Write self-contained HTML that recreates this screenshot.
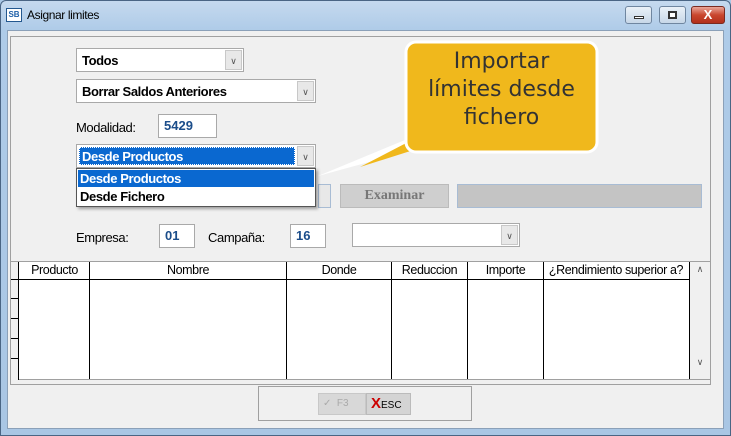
<!DOCTYPE html>
<html><head><style>
*{box-sizing:border-box;margin:0;padding:0}
body{width:731px;height:436px;overflow:hidden;background:#aac8e6;font-family:"Liberation Sans",sans-serif;position:relative}
.abs{position:absolute}
.win{left:0;top:0;width:731px;height:436px;background:linear-gradient(#c5d9ee,#aecbe8 30px,#a9c6e4);border:1px solid #4a6584;border-radius:6px 6px 0 0}
.client{left:7px;top:30px;width:717px;height:399px;background:#f0f0f0;border:1px solid #8ba0b8}
.n{font-size:13px;letter-spacing:-0.4px;color:#000}
.b{font-weight:bold}
.cb{background:#fff;border:1px solid #a9a9a9}
.arr{position:absolute;right:1px;top:1px;bottom:1px;width:17px;background:#e8e8e8;border:1px solid #c8c8c8;text-align:center;font-size:9px;color:#555;line-height:20px}
.tb{background:#fff;border:1px solid #a9a9a9;color:#1b4d8a;font-weight:bold;font-size:13px;padding-left:5px;line-height:22px}
.col{position:absolute;top:0;bottom:0;border-left:1px solid #000}
.hd{position:absolute;top:0;height:18px;font-size:12.5px;letter-spacing:-.4px;text-align:center;line-height:17px}
</style></head><body>
<div class="abs win"></div>
<div class="abs" style="left:6px;top:8px;width:16px;height:14px;background:#fff;border:1px solid #24588f;font-size:8px;font-weight:bold;color:#1d5fa8;line-height:12px;text-align:center">SB</div>
<div class="abs n" style="left:27px;top:8px;font-size:12px">Asignar limites</div>
<div class="abs" style="left:625px;top:6px;width:27px;height:18px;border:1px solid #6f86a0;border-radius:3px;background:linear-gradient(#eaf1f8,#c7d7e8)"><div style="margin:9px auto 0;width:10px;height:3px;border:1px solid #333;background:#fff"></div></div>
<div class="abs" style="left:659px;top:6px;width:27px;height:18px;border:1px solid #6f86a0;border-radius:3px;background:linear-gradient(#eaf1f8,#c7d7e8)"><div style="margin:4px auto 0;width:9px;height:8px;border:2px solid #333;background:#fff"></div></div>
<div class="abs" style="left:691px;top:6px;width:34px;height:18px;border:1px solid #7a2a20;border-radius:3px;background:linear-gradient(#e9a699,#c9462e 50%,#b2301c);color:#fff;font-weight:bold;font-size:13px;text-align:center;line-height:16px">X</div>
<div class="abs client"></div>
<div class="abs" style="left:10px;top:36px;width:701px;height:349px;border:1px solid #a0a0a0"></div>

<div class="abs cb" style="left:76px;top:48px;width:168px;height:24px"><span class="n b" style="position:absolute;left:5px;top:4px">Todos</span><div class="arr">&#8744;</div></div>
<div class="abs cb" style="left:76px;top:79px;width:240px;height:24px"><span class="n b" style="position:absolute;left:5px;top:4px">Borrar Saldos Anteriores</span><div class="arr">&#8744;</div></div>
<div class="abs n" style="left:76px;top:120px">Modalidad:</div>
<div class="abs tb" style="left:158px;top:114px;width:59px;height:24px">5429</div>
<div class="abs cb" style="left:76px;top:144px;width:240px;height:24px"><div style="position:absolute;left:2px;top:2px;right:20px;bottom:2px;background:#0a68d0;border:1px dotted #fff"></div><span class="n b" style="position:absolute;left:5px;top:4px;color:#fff">Desde Productos</span><div class="arr">&#8744;</div></div>

<div class="abs" style="left:318px;top:184px;width:13px;height:24px;border:1px solid #a8bcd4;background:#e8e8e8"></div>
<div class="abs" style="left:340px;top:184px;width:109px;height:24px;background:#cfcfcf;border:1px solid #bbb;font-family:'Liberation Serif',serif;font-weight:bold;color:#777;font-size:14px;text-align:center;line-height:22px">Examinar</div>
<div class="abs" style="left:457px;top:184px;width:245px;height:24px;background:#c4c4c4;border:1px solid #a8bcd4"></div>

<div class="abs" style="left:76px;top:168px;width:240px;height:39px;background:#fff;border:1px solid #555;box-shadow:2px 2px 3px rgba(0,0,0,.35)">
<div style="position:absolute;left:1px;top:1px;right:1px;height:17px;background:#0a68d0"></div>
<span class="n b" style="position:absolute;left:3px;top:2px;color:#fff">Desde Productos</span>
<span class="n b" style="position:absolute;left:3px;top:20px">Desde Fichero</span></div>

<div class="abs n" style="left:76px;top:230px">Empresa:</div>
<div class="abs tb" style="left:159px;top:224px;width:36px;height:24px">01</div>
<div class="abs n" style="left:208px;top:230px">Campaña:</div>
<div class="abs tb" style="left:290px;top:224px;width:36px;height:24px">16</div>
<div class="abs cb" style="left:352px;top:223px;width:168px;height:24px"><div class="arr">&#8744;</div></div>

<svg class="abs" style="left:0;top:0" width="731" height="436">
<polygon points="405,140 450,140 318,176" fill="#fff"/>
<polygon points="412,140 445,140 360,167" fill="#f0b81c"/>
<rect x="406" y="42" width="191" height="110" rx="10" fill="#f0b81c" stroke="#fff" stroke-width="3"/>
</svg>
<div class="abs" style="left:406px;top:48px;width:191px;text-align:center;font-family:'DejaVu Sans',sans-serif;font-size:22px;line-height:28px;color:#333">Importar<br>límites desde<br>fichero</div>

<div class="abs" style="left:10px;top:261px;width:701px;height:119px;background:#fff;border:1px solid #a0a0a0">
<div style="position:absolute;left:0;top:0;width:8px;height:118px;background:#f0f0f0;border-right:1px solid #000"></div>
<div style="position:absolute;left:0;top:17px;width:686px;border-top:1px solid #000"></div>
<div style="position:absolute;left:0;top:36px;width:8px;border-top:1px solid #000"></div>
<div style="position:absolute;left:0;top:56px;width:8px;border-top:1px solid #000"></div>
<div style="position:absolute;left:0;top:76px;width:8px;border-top:1px solid #000"></div>
<div style="position:absolute;left:0;top:96px;width:8px;border-top:1px solid #000"></div>
<div class="col" style="left:78px"></div><div class="col" style="left:275px"></div><div class="col" style="left:380px"></div><div class="col" style="left:456px"></div><div class="col" style="left:532px"></div><div class="col" style="left:678px"></div>
<div class="hd" style="left:9px;width:69px">Producto</div>
<div class="hd" style="left:79px;width:196px">Nombre</div>
<div class="hd" style="left:276px;width:104px">Donde</div>
<div class="hd" style="left:381px;width:75px">Reduccion</div>
<div class="hd" style="left:457px;width:75px">Importe</div>
<div class="hd" style="left:532px;width:146px">¿Rendimiento superior a?</div>
<div style="position:absolute;left:679px;top:0;width:20px;height:117px;background:#f0f0f0;font-size:9px;color:#555;text-align:center"><div style="margin-top:2px">&#8743;</div><div style="margin-top:82px">&#8744;</div></div>
</div>

<div class="abs" style="left:258px;top:386px;width:214px;height:35px;border:1px solid #a0a0a0"></div>
<div class="abs" style="left:318px;top:393px;width:48px;height:22px;background:#d8d8d8;border:1px solid #c8c8c8;color:#aaa;font-size:10px;line-height:20px;padding-left:4px">&#10003;&nbsp;&nbsp;F3</div>
<div class="abs" style="left:366px;top:393px;width:45px;height:22px;background:#d4d4d4;border:1px solid #bbb;font-size:10px;line-height:20px;padding-left:4px"><span style="color:#c00;font-size:15px;font-weight:bold">X</span>ESC</div>
</body></html>
